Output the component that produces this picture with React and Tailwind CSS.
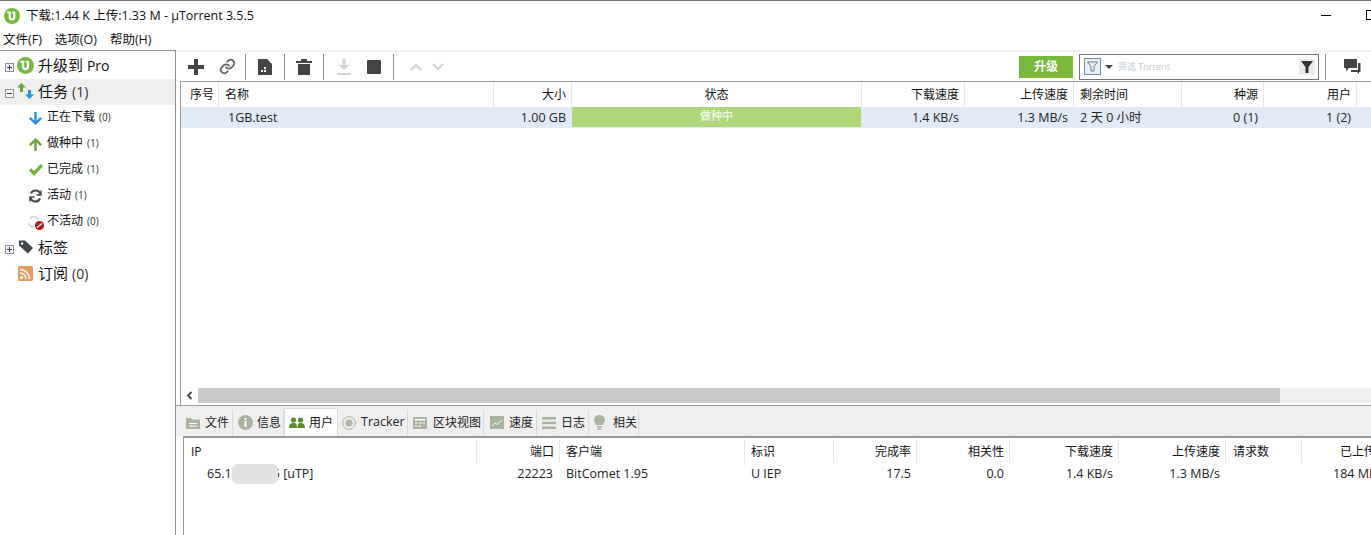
import React from 'react'

const font = { fontFamily: '"Open Sans", "Noto Sans CJK SC", sans-serif' }

function Logo({ size = 16 }) {
    return (
        <svg width={size} height={size} viewBox="0 0 16 16" className="shrink-0">
            <circle cx="8" cy="8" r="8" fill="#76b83f" />
            <path d="M3.2 3.600H6.800V8.800C6.800 9.900 7.200 10.400 8 10.400C8.800 10.400 9.200 9.900 9.200 8.800V5.200H8V3.600H11.400V9C11.400 11.400 10 12.600 8 12.600C6 12.600 4.600 11.400 4.600 9V5.200H3.200Z" fill="#fff" />
        </svg>
    )
}

function Expander({ open }) {
    return (
        <span className="w-[9px] h-[9px] mt-[4px] border border-[#919191] bg-[#f4f4f4] relative shrink-0 block">
            <span className="absolute left-[1px] right-[1px] top-[3px] h-px bg-[#2b3f7a]" />
            {!open && <span className="absolute top-[1px] bottom-[1px] left-[3px] w-px bg-[#2b3f7a]" />}
        </span>
    )
}

function SideItem({ icon, label, count, expander, open, active, sub }) {
    return (
        <div className={`h-[26px] pb-[2px] flex items-center ${active ? 'bg-[#efefef]' : ''} ${sub ? 'text-[12px]' : 'text-[15px]'}`}>
            <span className="w-[18px] pl-[5px] shrink-0 flex items-center">{expander && <Expander open={open} />}</span>
            {sub && <span className="w-[10px] shrink-0" />}
            <span className={`w-[15px] flex justify-center shrink-0 ${sub ? 'mt-[2px]' : ''}`}>{icon}</span>
            <span className={`${sub ? 'ml-[4px]' : 'ml-[5px]'} text-[#111] whitespace-nowrap`}>{label}</span>
            {count && <span className={`${sub ? 'text-[10px] ml-[4px]' : 'text-[14px] ml-[4px]'} text-[#333]`}>{count}</span>}
        </div>
    )
}

function ToolSep() {
    return <span className="w-px h-[26px] bg-[#8d8d8d] shrink-0" />
}

const torrentCols = [
    { label: '序号', width: 'w-[38px]', align: 'text-right pr-[4px]' },
    { label: '名称', width: 'w-[275px]', align: 'text-left pl-[6px]' },
    { label: '大小', width: 'w-[78px]', align: 'text-right pr-[5px]' },
    { label: '状态', width: 'w-[290px]', align: 'text-center' },
    { label: '下载速度', width: 'w-[103px]', align: 'text-right pr-[5px]' },
    { label: '上传速度', width: 'w-[109px]', align: 'text-right pr-[5px]' },
    { label: '剩余时间', width: 'w-[108px]', align: 'text-left pl-[6px]' },
    { label: '种源', width: 'w-[82px]', align: 'text-right pr-[5px]' },
    { label: '用户', width: 'w-[93px]', align: 'text-right pr-[5px]' },
]

const peerCols = [
    { label: 'IP', width: 'w-[293px]', align: 'text-left pl-[7px]' },
    { label: '端口', width: 'w-[83px]', align: 'text-right pr-[5px]' },
    { label: '客户端', width: 'w-[185px]', align: 'text-left pl-[6px]' },
    { label: '标识', width: 'w-[89px]', align: 'text-left pl-[6px]' },
    { label: '完成率', width: 'w-[83px]', align: 'text-right pr-[5px]' },
    { label: '相关性', width: 'w-[93px]', align: 'text-right pr-[5px]' },
    { label: '下载速度', width: 'w-[109px]', align: 'text-right pr-[5px]' },
    { label: '上传速度', width: 'w-[107px]', align: 'text-right pr-[5px]' },
    { label: '请求数', width: 'w-[76px]', align: 'text-left pl-[7px]' },
    { label: '已上传', width: 'w-[90px]', align: 'text-right pr-[15px]' },
]

function HeaderRow({ cols, className, leading }) {
    return (
        <div className={`flex text-[12px] text-[#111] whitespace-nowrap ${className}`}>
            {cols.map((c) => (
                <div key={c.label} className={`${c.width} ${c.align} ${leading} shrink-0 border-r border-[#e6e6e6]`}>
                    {c.label}
                </div>
            ))}
        </div>
    )
}

const tabIconColor = '#a9b3a0'

const tabs = [
    {
        label: '文件', width: 'w-[52px]', inset: 'pl-[5px] gap-[5px]',
        icon: <svg width="14" height="12" viewBox="0 0 14 12"><path d="M0 1h5l1 1.500h8V12H0z" fill={tabIconColor} /><path d="M3 6.500h8M3 9h8" stroke="#fff" /></svg>,
    },
    {
        label: '信息', width: 'w-[51px]', inset: 'pl-[5px] gap-[4px]',
        icon: <svg width="15" height="15" viewBox="0 0 15 15"><circle cx="7.500" cy="7.500" r="7.500" fill={tabIconColor} /><rect x="6.500" y="6" width="2" height="6" fill="#fff" /><rect x="6.500" y="3" width="2" height="2" fill="#fff" /></svg>,
    },
    {
        label: '用户', width: 'w-[54px]', inset: 'pl-[4px] gap-[4px]', active: true,
        icon: <svg width="16" height="12" viewBox="0 0 16 12"><circle cx="4.500" cy="3" r="2.600" fill="#5a8f29" /><circle cx="11.500" cy="3" r="2.600" fill="#5a8f29" /><path d="M0 11c0-4 2-5 4.500-5S8 7 8 11zM8.500 11c0-4 .5-5 3-5s4.500 1 4.500 5z" fill="#5a8f29" /></svg>,
    },
    {
        label: 'Tracker', width: 'w-[70px]', inset: 'pl-[4px] gap-[5px]',
        icon: <svg width="14" height="14" viewBox="0 0 14 14"><circle cx="7" cy="7" r="6.300" fill="none" stroke={tabIconColor} /><circle cx="7" cy="7" r="3.500" fill={tabIconColor} /></svg>,
    },
    {
        label: '区块视图', width: 'w-[76px]', inset: 'pl-[5px] gap-[6px]',
        icon: <svg width="14" height="12" viewBox="0 0 14 12"><rect width="14" height="12" fill={tabIconColor} /><rect x="1.500" y="2" width="11" height="1.500" fill="#fff" /><path d="M2 6h3M6 6h3M10 6h2M2 9h2M5 9h3" stroke="#fff" /></svg>,
    },
    {
        label: '速度', width: 'w-[53px]', inset: 'pl-[6px] gap-[5px]',
        icon: <svg width="14" height="13" viewBox="0 0 14 13"><rect width="14" height="13" fill={tabIconColor} /><path d="M2 10l3-3 2 1.500L12 4" stroke="#fff" fill="none" /></svg>,
    },
    {
        label: '日志', width: 'w-[52px]', inset: 'pl-[5px] gap-[5px]',
        icon: <svg width="14" height="12" viewBox="0 0 14 12"><rect width="14" height="2.500" fill={tabIconColor} /><rect y="4.700" width="14" height="2.500" fill={tabIconColor} /><rect y="9.500" width="14" height="2.500" fill={tabIconColor} /></svg>,
    },
    {
        label: '相关', width: 'w-[50px]', inset: 'pl-[5px] gap-[8px]',
        icon: <svg width="11" height="15" viewBox="0 0 11 15"><path d="M5.500 0C8.500 0 11 2.200 11 5c0 2.200-1.500 3.300-2.200 5H2.200C1.500 8.300 0 7.200 0 5 0 2.200 2.500 0 5.500 0z" fill={tabIconColor} /><rect x="3" y="11" width="5" height="1.500" fill={tabIconColor} /><rect x="3.500" y="13.200" width="4" height="1.500" fill={tabIconColor} /></svg>,
    },
]

export default function App() {
    return (
        <div className="w-[1371px] h-[535px] overflow-hidden bg-white flex flex-col" style={font}>
            {/* Title bar */}
            <div className="h-[31px] border-t border-[#6e6e6e] flex items-center pl-[4px] shrink-0">
                <Logo size={16} />
                <span className="ml-[6px] text-[12.5px] text-[#111] whitespace-nowrap">下载:1.44 K 上传:1.33 M - µTorrent 3.5.5</span>
                <span className="ml-auto w-[10px] h-px bg-black mr-[35px] mb-[2px]" />
                <span className="w-[10px] h-[10px] border border-black mr-[-5px] mb-[2px]" />
            </div>

            {/* Menu */}
            <div className="h-[19px] flex items-center pl-[3px] gap-[13px] text-[12.5px] text-[#111] shrink-0">
                <span>文件(F)</span>
                <span>选项(O)</span>
                <span>帮助(H)</span>
            </div>

            <div className="flex-1 flex min-h-0">
                {/* Sidebar */}
                <aside className="w-[176px] border-t border-r border-[#8f8f8f] shrink-0 pt-[2px] relative">
                    <SideItem expander icon={<Logo size={17} />} label={<>升级到 <span className="text-[14px]">Pro</span></>} />
                    <SideItem expander open active icon={
                        <svg width="17" height="16" viewBox="0 0 17 16" className="shrink-0">
                            <path d="M4.500 0L9 4.500H6V9H3V4.500H0z" fill="#6aa63a" />
                            <path d="M12.500 16L8 11.500h3V7h3v4.500h3z" fill="#2b94d8" />
                        </svg>
                    } label="任务" count="(1)" />
                    <SideItem sub icon={
                        <svg width="13" height="13" viewBox="0 0 13 13" className="shrink-0"><path d="M6.500 13L0 6.800l1.700-1.700 3.600 3.400V0h2.400v8.500l3.600-3.400L13 6.800z" fill="#2b94d8" /></svg>
                    } label="正在下载" count="(0)" />
                    <SideItem sub icon={
                        <svg width="13" height="13" viewBox="0 0 13 13" className="shrink-0"><path d="M6.500 0L13 6.200l-1.700 1.700-3.600-3.400V13H5.300V4.500L1.700 7.900 0 6.200z" fill="#6aa63a" /></svg>
                    } label="做种中" count="(1)" />
                    <SideItem sub icon={
                        <svg width="14" height="12" viewBox="0 0 14 12" className="shrink-0"><path d="M0 6.500l2.200-2.200 2.800 2.800L11.800 0 14 2.200 5 12z" fill="#75ae3f" /></svg>
                    } label="已完成" count="(1)" />
                    <SideItem sub icon={
                        <svg width="13" height="14" viewBox="0 0 13 14" fill="none" stroke="#3f474c" strokeWidth="2" className="shrink-0">
                            <path d="M11.500 5.500A5 5 0 0 0 2 4.500M1.500 8.500A5 5 0 0 0 11 9.500" />
                            <path d="M12 1.500v4.500H7.500M1 12.500V8h4.500" strokeWidth="1.400" />
                        </svg>
                    } label="活动" count="(1)" />
                    <SideItem sub icon={
                        <svg width="16" height="15" viewBox="0 0 16 15" className="shrink-0">
                            <path d="M10 4A4.500 4.500 0 0 0 2 4M1 8a4.500 4.500 0 0 0 5 4" fill="none" stroke="#d4d4d4" strokeWidth="1.800" />
                            <circle cx="11.500" cy="10.500" r="4.500" fill="#b3161c" />
                            <path d="M9 12.500l5-4" stroke="#fff" strokeWidth="1.500" />
                        </svg>
                    } label="不活动" count="(0)" />
                    <SideItem expander icon={
                        <svg width="14" height="14" viewBox="0 0 15 14" className="shrink-0">
                            <path fillRule="evenodd" d="M0 0h6.500L15 8l-5.500 6L0 5.500zM3.300 2a1.300 1.300 0 1 0 0 2.600 1.300 1.300 0 0 0 0-2.600z" fill="#3f474c" />
                        </svg>
                    } label="标签" />
                    <SideItem icon={
                        <svg width="15" height="15" viewBox="0 0 15 15" className="shrink-0">
                            <rect width="15" height="15" rx="1.500" fill="#e79a63" />
                            <circle cx="3.500" cy="11.500" r="1.500" fill="#fff" />
                            <path d="M2 7a6 6 0 0 1 6 6M2 3.500A9.500 9.500 0 0 1 11.500 13" fill="none" stroke="#fff" strokeWidth="1.500" />
                        </svg>
                    } label="订阅" count="(0)" />
                </aside>

                {/* Main area */}
                <div className="flex-1 min-w-0 flex flex-col">
                    {/* Toolbar */}
                    <div className="h-[31px] border-t-2 border-[#f2f2f2] flex items-center pl-[4px] shrink-0">
                        <span className="w-[32px] flex justify-center">
                            <svg width="16" height="16" viewBox="0 0 16 16"><path d="M6 0h4v6h6v4h-6v6H6v-6H0V6h6z" fill="#444" /></svg>
                        </span>
                        <span className="w-[30px] mr-[3px] flex justify-center">
                            <svg width="17" height="17" viewBox="0 0 24 24" fill="none" stroke="#666" strokeWidth="2.600" strokeLinecap="round">
                                <path d="M10 13a5 5 0 0 0 7.500.5l3-3a5 5 0 0 0-7-7l-1.700 1.700" />
                                <path d="M14 11a5 5 0 0 0-7.500-.5l-3 3a5 5 0 0 0 7 7l1.700-1.700" />
                            </svg>
                        </span>
                        <ToolSep />
                        <span className="w-[38px] flex justify-center">
                            <svg width="14" height="16" viewBox="0 0 14 16">
                                <path d="M0 0h9l5 5v11H0z" fill="#444" />
                                <path d="M3 11h2v2H3zM6 11h2v2H6zM6 8h2v2H6z" fill="#fff" />
                            </svg>
                        </span>
                        <ToolSep />
                        <span className="w-[38px] flex justify-center">
                            <svg width="16" height="17" viewBox="0 0 16 17">
                                <path d="M0 3h16v2H0zM5 1h6v2H5zM2 6h12v11H2z" fill="#444" />
                            </svg>
                        </span>
                        <ToolSep />
                        <span className="w-[40px] flex justify-center">
                            <svg width="16" height="16" viewBox="0 0 16 16">
                                <path d="M8 11L3 6h3.500V0h3v6H13zM1 14h14v2H1z" fill="#d3d3d3" />
                            </svg>
                        </span>
                        <span className="w-[20px] flex justify-center">
                            <span className="w-[14px] h-[14px] bg-[#444] rounded-[1px] block" />
                        </span>
                        <span className="w-[9px]" />
                        <ToolSep />
                        <span className="ml-[16px] w-[12px] flex justify-center">
                            <svg width="12" height="8" viewBox="0 0 12 8" fill="none" stroke="#d3d3d3" strokeWidth="2"><path d="M1 7l5-5 5 5" /></svg>
                        </span>
                        <span className="ml-[10px] w-[12px] flex justify-center">
                            <svg width="12" height="8" viewBox="0 0 12 8" fill="none" stroke="#d3d3d3" strokeWidth="2"><path d="M1 1l5 5 5-5" /></svg>
                        </span>

                        <span className="ml-auto w-[54px] h-[22px] bg-[#78b83c] text-white text-[12px] font-semibold flex items-center justify-center mr-[6px]">升级</span>
                        <div className="w-[240px] h-[26px] border border-[#757575] flex items-center pl-[4px] pr-[3px] mr-[6px]">
                            <span className="w-[17px] h-[17px] border border-[#6f90b0] bg-[#e6eef6] flex items-center justify-center">
                                <svg width="11" height="11" viewBox="0 0 11 11" fill="none" stroke="#6c8191"><path d="M.500 1h10L7 5.500V10H4V5.500z" /></svg>
                            </span>
                            <svg width="8" height="4" viewBox="0 0 8 4" className="ml-[4px]"><path d="M0 0h8L4 4z" fill="#444" /></svg>
                            <span className="ml-[5px] text-[9px] text-[#c2ccd6] whitespace-nowrap">筛选 Torrent</span>
                            <span className="ml-auto w-[16px] h-[16px] bg-[#ececec] flex items-center justify-center">
                                <svg width="12" height="12" viewBox="0 0 12 12"><path d="M0 0h12L7.500 6v6h-3V6z" fill="#333" /></svg>
                            </span>
                        </div>
                        <span className="w-px h-[26px] bg-[#8d8d8d]" />
                        <span className="ml-[18px] mr-[10px]">
                            <svg width="17" height="15" viewBox="0 0 17 15">
                                <path d="M0 0h13v9H5l-3 3V9H0z" fill="#444" />
                                <path d="M14 4h2.500v9H15v2l-2-2H7v-2h7z" fill="#444" />
                            </svg>
                        </span>
                    </div>

                    {/* Torrent list */}
                    <div className="h-[324px] shrink-0 ml-[4px] border-l border-t border-[#9a9a9a] flex flex-col">
                        <HeaderRow cols={torrentCols} className="h-[25px]" leading="leading-[25px]" />
                        <div className="h-[21px] bg-[#e1ebf7] flex text-[12.5px] text-[#222] leading-[21px] whitespace-nowrap">
                            <div className="w-[38px]" />
                            <div className="w-[275px] pl-[9px]">1GB.test</div>
                            <div className="w-[78px] text-right pr-[6px]">1.00 GB</div>
                            <div className="w-[289px] bg-[#aed77c] text-white text-center text-[11px] leading-[18px] mb-[1px]">做种中</div>
                            <div className="w-[104px] text-right pr-[6px]">1.4 KB/s</div>
                            <div className="w-[109px] text-right pr-[6px]">1.3 MB/s</div>
                            <div className="w-[108px] pl-[6px]">2 天 0 小时</div>
                            <div className="w-[82px] text-right pr-[6px]">0 (1)</div>
                            <div className="w-[93px] text-right pr-[6px]">1 (2)</div>
                        </div>
                        <div className="flex-1" />
                        {/* Horizontal scrollbar */}
                        <div className="h-[15px] mb-[2px] bg-[#efefef] flex">
                            <div className="w-[17px] flex items-center justify-center bg-white">
                                <svg width="7" height="9" viewBox="0 0 7 9" fill="none" stroke="#444" strokeWidth="1.800"><path d="M5.500 1L2 4.500 5.500 8" /></svg>
                            </div>
                            <div className="w-[1082px] bg-[#c9c9c9]" />
                        </div>
                    </div>

                    {/* Detail tabs */}
                    <div className="h-[31px] shrink-0 bg-[#efefef] border-t border-[#9a9a9a] flex items-end pl-[5px]">
                        {tabs.map((t) => (
                            <div
                                key={t.label}
                                className={`${t.width} ${t.inset} shrink-0 flex items-center text-[12px] whitespace-nowrap ${t.active ? 'h-[28px] bg-white border-x border-t border-[#dcdcdc] text-[#111]' : 'h-[25px] mb-[1px] border-r border-[#d9d9d9] text-[#222]'}`}
                            >
                                {t.icon}
                                <span className={t.label === 'Tracker' ? 'text-[12.5px]' : ''}>{t.label}</span>
                            </div>
                        ))}
                    </div>

                    {/* Peers list */}
                    <div className="flex-1 ml-[7px] border-l border-t-2 border-[#9a9a9a] min-h-0 overflow-hidden">
                        <HeaderRow cols={peerCols} className="h-[24px] mt-[1px]" leading="leading-[25px]" />
                        <div className="flex text-[12.5px] text-[#222] leading-[21px] whitespace-nowrap">
                            <div className="w-[293px] shrink-0 pl-[23px] flex items-center">
                                <span>65.1</span>
                                <span className="w-[46px] h-[20px] bg-[#e2e2e2] rounded-md relative z-10 -my-[3px]" />
                                <span className="-ml-[5px]">5 [uTP]</span>
                            </div>
                            <div className="w-[83px] shrink-0 text-right pr-[7px]">22223</div>
                            <div className="w-[185px] shrink-0 pl-[6px]">BitComet 1.95</div>
                            <div className="w-[89px] shrink-0 pl-[6px]">U IEP</div>
                            <div className="w-[83px] shrink-0 text-right pr-[6px]">17.5</div>
                            <div className="w-[93px] shrink-0 text-right pr-[6px]">0.0</div>
                            <div className="w-[109px] shrink-0 text-right pr-[6px]">1.4 KB/s</div>
                            <div className="w-[107px] shrink-0 text-right pr-[6px]">1.3 MB/s</div>
                            <div className="w-[76px] shrink-0" />
                            <div className="w-[90px] shrink-0 text-right pr-[15px]">184 MB</div>
                        </div>
                    </div>
                </div>
            </div>
        </div>
    )
}
